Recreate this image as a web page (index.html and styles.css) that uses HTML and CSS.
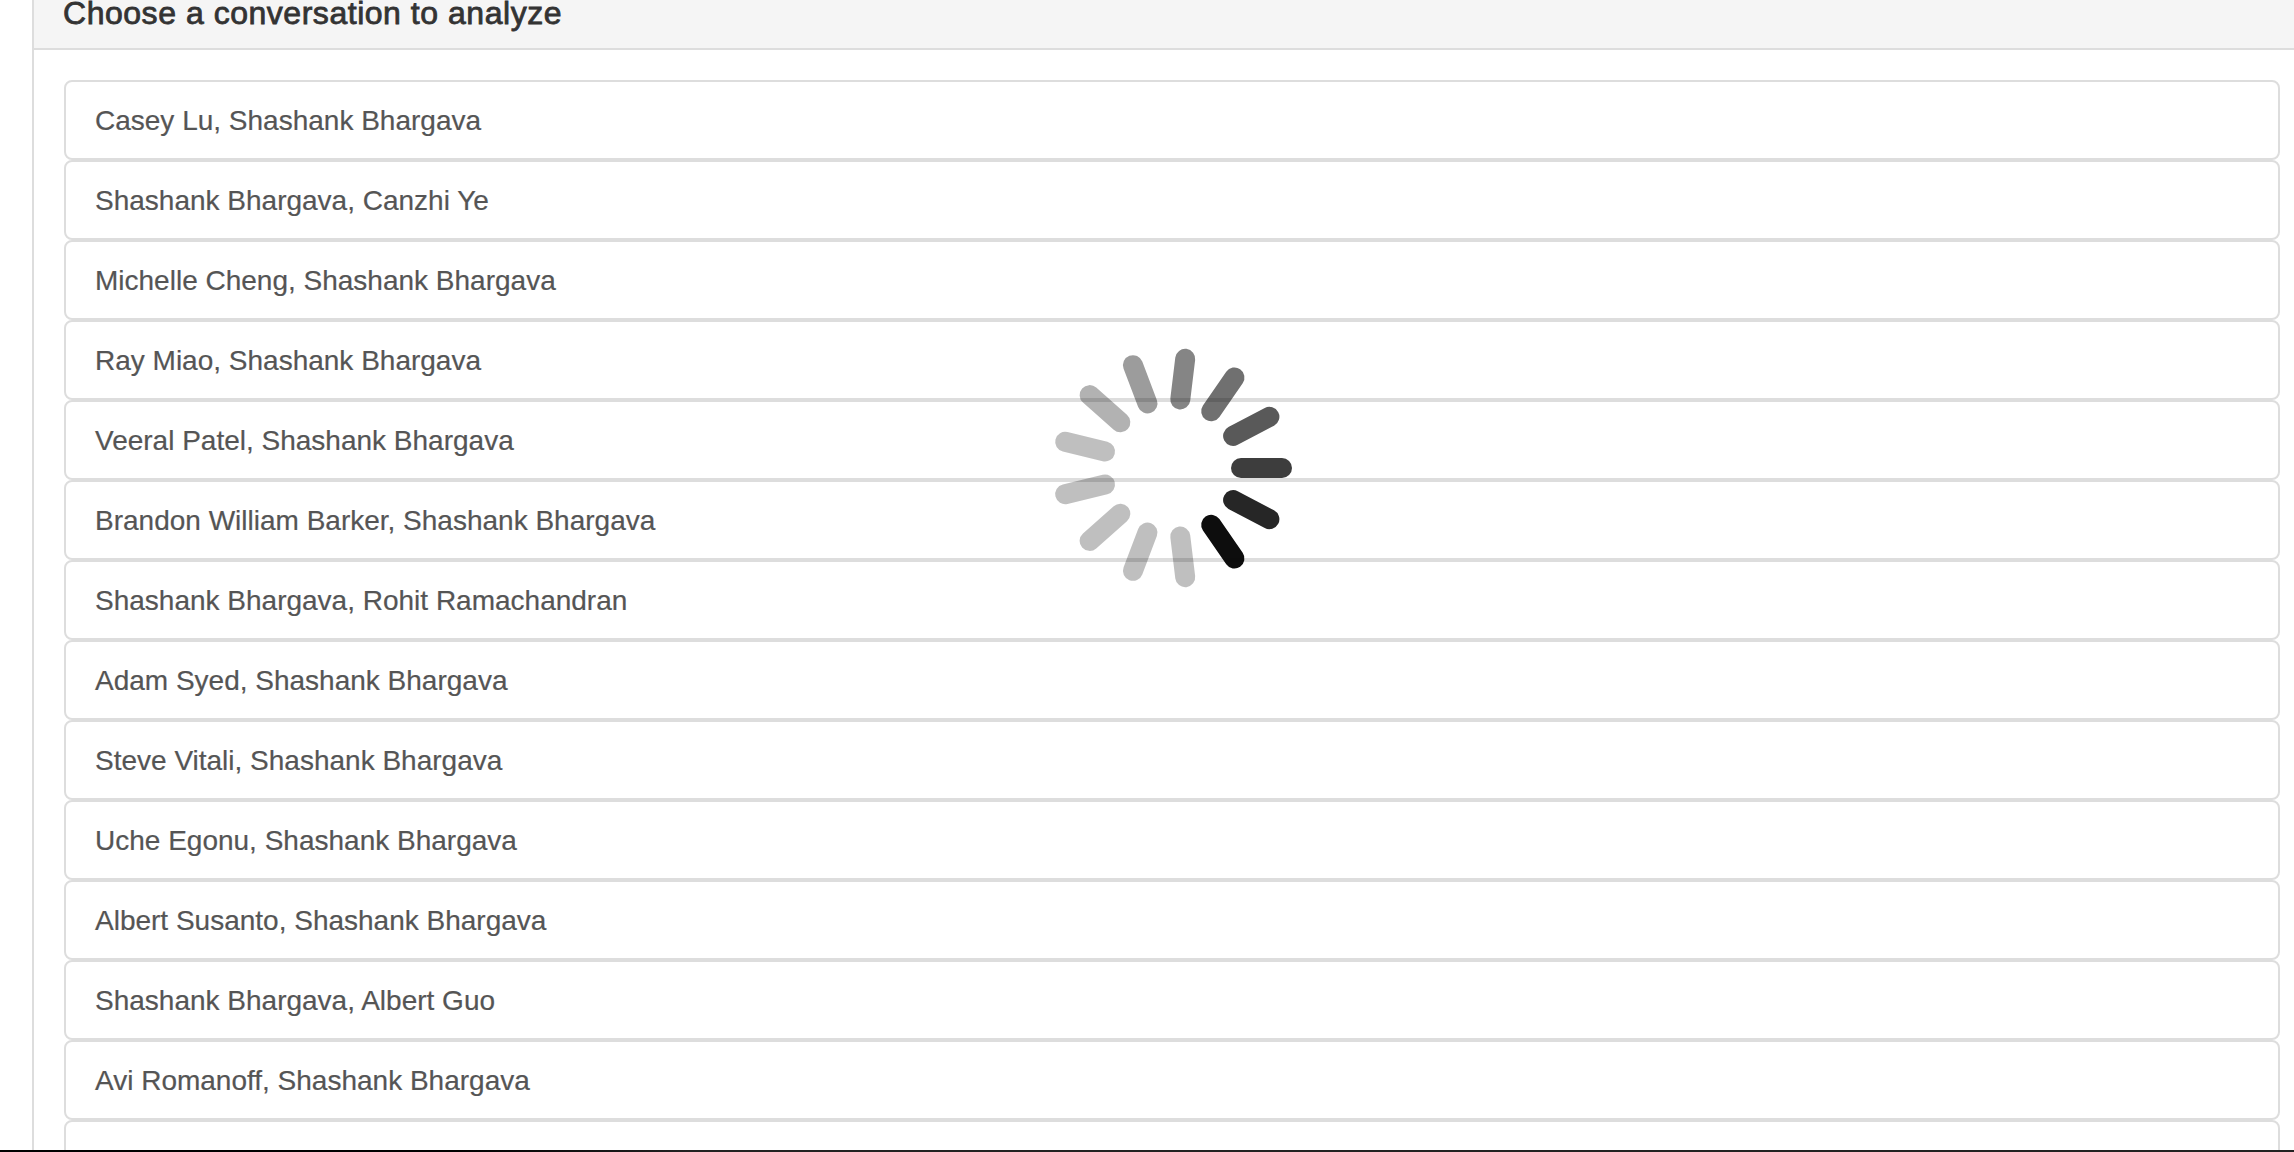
FILE: index.html
```html
<!DOCTYPE html>
<html lang="en">
<head>
    <meta charset="UTF-8">
    <title>Choose a conversation</title>
    <link rel="stylesheet" href="styles.css">
</head>
<body>
<div class="page">
    <div class="panel">
        <div class="panel-heading">
            <h3 class="panel-title">Choose a conversation to analyze</h3>
        </div>
        <div class="panel-body">
            <div class="list-group">
                <a class="list-group-item">Casey Lu, Shashank Bhargava</a>
                <a class="list-group-item">Shashank Bhargava, Canzhi Ye</a>
                <a class="list-group-item">Michelle Cheng, Shashank Bhargava</a>
                <a class="list-group-item">Ray Miao, Shashank Bhargava</a>
                <a class="list-group-item">Veeral Patel, Shashank Bhargava</a>
                <a class="list-group-item">Brandon William Barker, Shashank Bhargava</a>
                <a class="list-group-item">Shashank Bhargava, Rohit Ramachandran</a>
                <a class="list-group-item">Adam Syed, Shashank Bhargava</a>
                <a class="list-group-item">Steve Vitali, Shashank Bhargava</a>
                <a class="list-group-item">Uche Egonu, Shashank Bhargava</a>
                <a class="list-group-item">Albert Susanto, Shashank Bhargava</a>
                <a class="list-group-item">Shashank Bhargava, Albert Guo</a>
                <a class="list-group-item">Avi Romanoff, Shashank Bhargava</a>
                <a class="list-group-item">Shell Shaver, Shashank Bhargava</a>
            </div>
        </div>
    </div>

    <!-- Spinner over the list -->
    <svg class="spinner" width="244" height="244" viewBox="-122 -122 244 244">
        <g>
            <rect class="bar" x="59" y="-10" width="61" height="20" rx="10" opacity="0.76"/>
            <rect class="bar" x="59" y="-10" width="61" height="20" rx="10" opacity="0.85" transform="rotate(27.7)"/>
            <rect class="bar" x="59" y="-10" width="61" height="20" rx="10" opacity="0.95" transform="rotate(55.4)"/>
            <rect class="bar" x="59" y="-10" width="61" height="20" rx="10" opacity="0.25" transform="rotate(83.1)"/>
            <rect class="bar" x="59" y="-10" width="61" height="20" rx="10" opacity="0.25" transform="rotate(110.8)"/>
            <rect class="bar" x="59" y="-10" width="61" height="20" rx="10" opacity="0.25" transform="rotate(138.5)"/>
            <rect class="bar" x="59" y="-10" width="61" height="20" rx="10" opacity="0.25" transform="rotate(166.2)"/>
            <rect class="bar" x="59" y="-10" width="61" height="20" rx="10" opacity="0.25" transform="rotate(193.8)"/>
            <rect class="bar" x="59" y="-10" width="61" height="20" rx="10" opacity="0.3" transform="rotate(221.5)"/>
            <rect class="bar" x="59" y="-10" width="61" height="20" rx="10" opacity="0.39" transform="rotate(249.2)"/>
            <rect class="bar" x="59" y="-10" width="61" height="20" rx="10" opacity="0.48" transform="rotate(276.9)"/>
            <rect class="bar" x="59" y="-10" width="61" height="20" rx="10" opacity="0.56" transform="rotate(304.6)"/>
            <rect class="bar" x="59" y="-10" width="61" height="20" rx="10" opacity="0.65" transform="rotate(332.3)"/>
        </g>
    </svg>
</div>
<div class="window-edge"></div>
</body>
</html>
```

FILE: styles.css
```css
html, body {
    margin: 0;
    height: 100%;
    overflow: hidden;
    background-color: #fff;
}
body {
    display: flex;
    flex-direction: column;
    font-family: "Liberation Sans", Arial, sans-serif;
    color: #333;
}
.page {
    position: relative;
    flex: 1;
    min-height: 0;
    overflow: hidden;
    padding-left: 32px;
}

/* Panel runs past the right side of the window and is scrolled at the top */
.panel {
    width: 2290px;
    margin-top: -27px;
    border-left: 2px solid #ddd;
}
.panel-heading {
    height: 52px;
    padding: 23px 29px 0;
    background-color: #f5f5f5;
    border-bottom: 2px solid #ddd;
}
.panel-title {
    margin: 0;
    font-size: 32px;
    font-weight: 400;
    letter-spacing: 0.53px;
    -webkit-text-stroke: 0.8px #333;
    line-height: 35px;
    color: #333;
}
.panel-body {
    padding: 30px;
}
.list-group {
    width: 2216px;
}
.list-group-item {
    display: block;
    box-sizing: border-box;
    height: 80px;
    padding: 19px 29px;
    border: 2px solid #ddd;
    border-radius: 8px;
    font-size: 28px;
    line-height: 40px;
    color: #555;
    -webkit-text-stroke: 0.2px #555;
    background-color: #fff;
}

.spinner {
    position: absolute;
    left: 1050px;
    top: 346px;
}
.bar {
    fill: #000;
}

.window-edge {
    height: 2px;
    background: linear-gradient(to right, #000 20%, #222 30%);
}
```
